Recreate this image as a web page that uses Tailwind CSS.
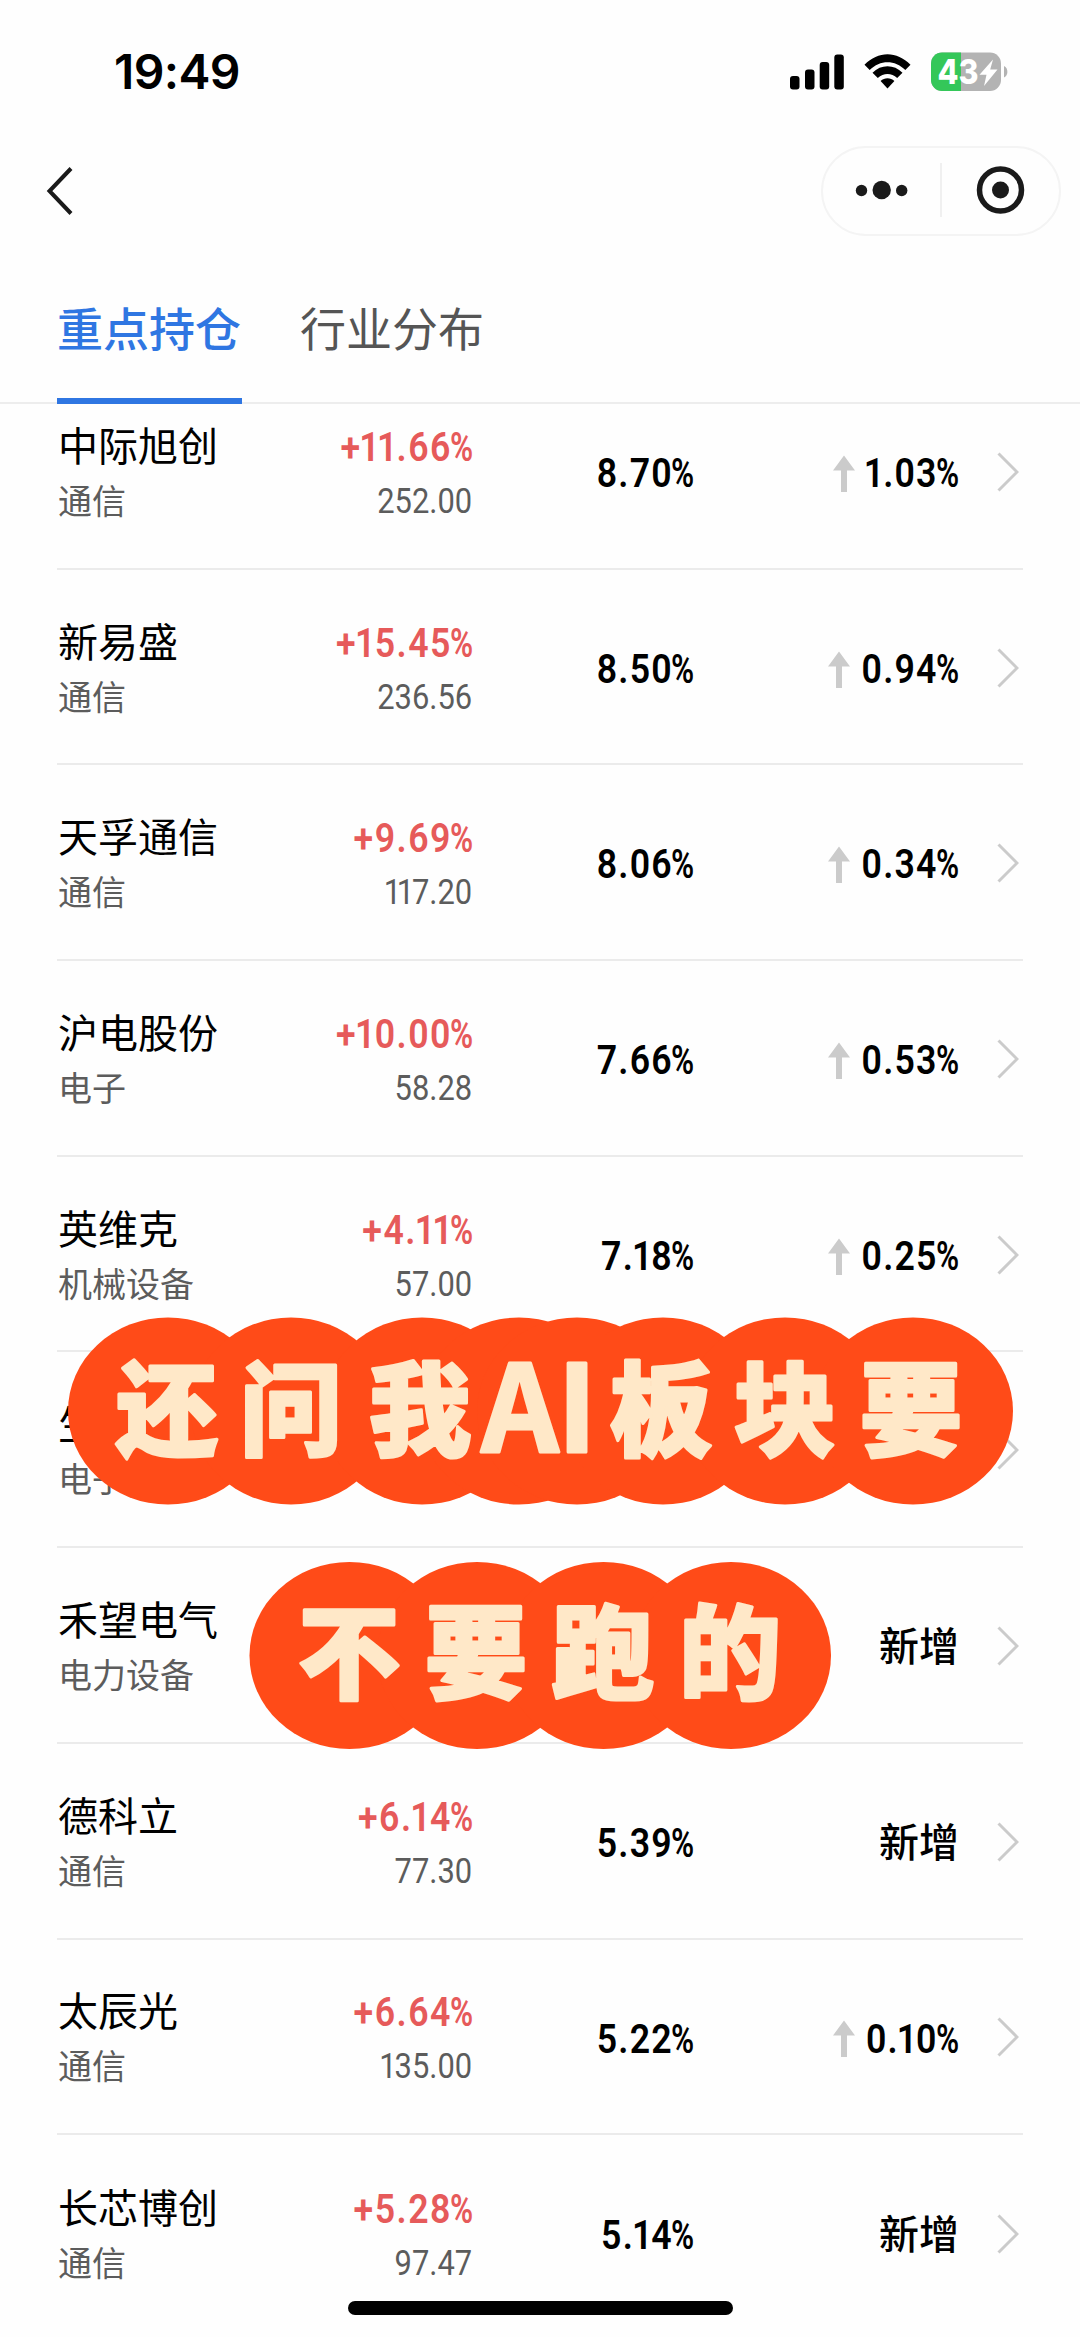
<!DOCTYPE html>
<html lang="zh-CN">
<head>
    <meta charset="UTF-8">
    <meta name="viewport" content="width=device-width, initial-scale=1.0">
    <title>重点持仓</title>
    <script src="https://cdn.jsdelivr.net/npm/@tailwindcss/browser@4"></script>
</head>
<body class="bg-[#fefefe] font-['Roboto','Noto_Sans_CJK_SC',sans-serif]">
<div class="relative w-[1080px] h-[2337px] overflow-hidden flex flex-col">
    <!-- Status bar -->
    <header class="h-[140px] shrink-0 pl-[114px] pr-[72px] pt-1 flex justify-between items-center">
        <div class="font-['Inter',sans-serif] font-semibold text-[48px] tracking-[-0.6px] leading-none text-black">19:49</div>
        <div class="flex items-center gap-5">
            <svg class="w-[54px] h-[36px]" viewBox="0 0 54 36">
                <rect x="0" y="22" width="9.5" height="13.5" rx="3"/>
                <rect x="15" y="15.500" width="9.500" height="20" rx="3"/>
                <rect x="29.700" y="8" width="9.500" height="27.500" rx="3"/>
                <rect x="44.300" y="0.500" width="9.500" height="35" rx="3"/>
            </svg>
            <svg class="w-[47px] h-[36px]" viewBox="0 0 47 36">
                <path d="M0.500 10.800C14-3.300 33-3.300 46.500 10.800L41.300 16C31 5.600 16 5.600 5.700 16Z"/>
                <path d="M8.500 18.800C17 10.200 30 10.200 38.500 18.800L33.200 24.100C27.500 18.600 19.500 18.600 13.800 24.100Z"/>
                <path d="M16.600 27C20.500 23.200 26.500 23.200 30.400 27L23.500 34.600Z"/>
            </svg>
            <svg class="w-[77px] h-[40px]" viewBox="0 0 77 40">
                <defs>
                    <clipPath id="battery"><rect x="0" y="0.500" width="70" height="38.500" rx="11"/></clipPath>
                </defs>
                <g clip-path="url(#battery)">
                    <rect width="70" height="40" fill="#b3b3b3"/>
                    <rect width="30" height="40" fill="#34c759"/>
                </g>
                <path d="M73 14C77.500 16 77.500 23.500 73 25.500Z" fill="#b3b3b3"/>
                <text x="6.500" y="31.500" font-family="Inter, sans-serif" font-weight="800" font-size="34" textLength="41" lengthAdjust="spacingAndGlyphs" fill="#fff">43</text>
                <path d="M62 7.500L48.500 22.800H55.500L53 34L66.500 17.500H59.200Z" fill="#fff"/>
            </svg>
        </div>
    </header>

    <!-- Navigation -->
    <nav class="h-[102px] shrink-0 pl-[46px] pr-[19px] flex justify-between items-center">
        <svg class="w-7 h-12" viewBox="0 0 28 48" fill="none" stroke="#1a1a1a" stroke-width="4">
            <path d="M25 1.500L3.500 24L25 46.500"/>
        </svg>
        <div class="w-[240px] h-[90px] border-2 border-[#f4f4f4] rounded-full flex items-center">
            <svg class="w-full h-full" viewBox="0 0 236 86">
                <g fill="#1a1a1a">
                    <circle cx="38.500" cy="42.500" r="5.700"/>
                    <circle cx="58.700" cy="42" r="9.200"/>
                    <circle cx="78.700" cy="42.500" r="5.700"/>
                    <circle cx="177.500" cy="42" r="8.500"/>
                </g>
                <circle cx="177.500" cy="42" r="21" fill="none" stroke="#1a1a1a" stroke-width="5.500"/>
                <rect x="117" y="15" width="2" height="54" fill="#f0f0f0"/>
            </svg>
        </div>
    </nav>

    <!-- Tabs -->
    <div class="h-[162px] shrink-0 pl-[57px] flex gap-[58px] border-b-2 border-[#ededed] text-[46px] leading-[68px]">
        <div class="w-[185px] h-[162px] pt-[54px] border-b-6 border-[#2f76e2] text-[#2f76e2] font-medium">重点持仓</div>
        <div class="pt-[54px] text-[#555]">行业分布</div>
    </div>

    <!-- Holdings -->
    <main class="flex-1 overflow-hidden px-[57px]">
        <div id="holdings" class="-mt-[30px]"></div>
    </main>

    <!-- Caption stickers -->
    <svg class="absolute left-0 top-[1300px] w-[1080px] h-[470px]" viewBox="0 1300 1080 470">
        <g id="bubbles" fill="#ff4b18"></g>
        <g fill="#ffe8c8" stroke="#ffe8c8" stroke-width="3" stroke-linejoin="round" text-anchor="middle" font-family="'Noto Sans CJK SC', sans-serif" font-weight="900" font-size="102">
            <text y="1448" x="167 291 420">还问我</text>
            <text y="1452" x="520 577" font-size="120" font-weight="700">AI</text>
            <text y="1448" x="661 785 911">板块要</text>
            <text y="1691" x="349 476 603 730">不要跑的</text>
        </g>
    </svg>

    <!-- Home indicator -->
    <div class="absolute left-[348px] top-[2301px] w-[385px] h-[14px] rounded-full bg-black"></div>
</div>

<script>
    const holdings = [
        { name: "中际旭创", sector: "通信", change: "+11.66%", price: "252.00", ratio: "8.70%", diff: "1.03%" },
        { name: "新易盛", sector: "通信", change: "+15.45%", price: "236.56", ratio: "8.50%", diff: "0.94%" },
        { name: "天孚通信", sector: "通信", change: "+9.69%", price: "117.20", ratio: "8.06%", diff: "0.34%" },
        { name: "沪电股份", sector: "电子", change: "+10.00%", price: "58.28", ratio: "7.66%", diff: "0.53%" },
        { name: "英维克", sector: "机械设备", change: "+4.11%", price: "57.00", ratio: "7.18%", diff: "0.25%" },
        { name: "生", sector: "电子", change: "", price: "", ratio: "", diff: "" },
        { name: "禾望电气", sector: "电力设备", change: "", price: "", ratio: "", diff: "新增" },
        { name: "德科立", sector: "通信", change: "+6.14%", price: "77.30", ratio: "5.39%", diff: "新增" },
        { name: "太辰光", sector: "通信", change: "+6.64%", price: "135.00", ratio: "5.22%", diff: "0.10%" },
        { name: "长芯博创", sector: "通信", change: "+5.28%", price: "97.47", ratio: "5.14%", diff: "新增" },
    ];

    const arrow = `<svg class="w-[22px] h-[38px] -mr-[3px]" viewBox="0 0 22 38" fill="#cbcbcb"><path d="M11 0.500L22 15.500H14V37H8V15.500H0Z"/></svg>`;

    // narrow "1" and "%" so the figures set tighter
    const percent = v => v
        .replace(/1/g, `<span class="-mx-[2.5px]">1</span>`)
        .replace("%", `<span class="inline-block tracking-normal origin-right scale-x-[0.88] -ml-[6px]">%</span>`);
    const price = v => v.replace(/1/g, `<span class="-mx-[2.5px]">1</span>`);

    document.getElementById("holdings").innerHTML = holdings.map(h => {
        const isNew = h.diff === "新增";
        return `
        <div class="h-[195.7px] border-b-2 last:border-b-0 border-[#ebebeb] grid grid-cols-[240px_176px_221px_265px_1fr] items-center text-[40px] text-black">
            <div class="pt-2 pl-px whitespace-nowrap">
                <div class="leading-[54px]">${h.name}</div>
                <div class="text-[34px] leading-[54px] text-[#5c5c5c]">${h.sector}</div>
            </div>
            <div class="pt-2 flex flex-col items-end origin-right scale-x-[0.87]">
                <div class="text-[41px] leading-[53px] tracking-[1.7px] font-semibold text-[#e65a5a]">${percent(h.change)}</div>
                <div class="pr-px text-[35.5px] leading-[55px] text-[#5c5c5c]">${price(h.price)}</div>
            </div>
            <div class="pt-1.5 text-right text-[41px] tracking-[1.4px] font-semibold origin-right scale-x-[0.87]">${percent(h.ratio)}</div>
            <div class="pt-1.5 flex justify-end items-center">
                ${h.diff && !isNew ? arrow : ""}
                ${isNew ? `<span class="font-medium">${h.diff}</span>` : `<span class="text-[41px] tracking-[1.4px] font-semibold origin-right scale-x-[0.87]">${percent(h.diff)}</span>`}
            </div>
            <svg class="w-[22px] h-10 ml-[38px] mt-0.5" viewBox="0 0 22 40" fill="none" stroke="#cbcbcb" stroke-width="3"><path d="M1.500 1.500L20 20L1.500 38.500"/></svg>
        </div>`;
    }).join("");

    // one bubble behind each caption character
    const rows = [
        { cy: 1411, xs: [168, 291, 422, 519, 577, 663, 785, 913] },
        { cy: 1655.5, xs: [349.5, 477, 603.5, 731] },
    ];
    document.getElementById("bubbles").innerHTML = rows.map(r =>
        r.xs.map(x => `<ellipse cx="${x}" cy="${r.cy}" rx="100" ry="93.500"/>`).join("")
    ).join("");
</script>
</body>
</html>
